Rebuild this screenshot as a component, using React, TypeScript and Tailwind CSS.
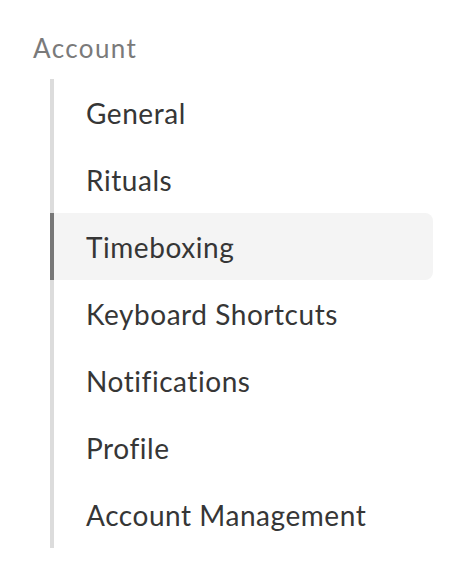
const items = [
  'General',
  'Rituals',
  'Timeboxing',
  'Keyboard Shortcuts',
  'Notifications',
  'Profile',
  'Account Management',
]

export default function App() {
  const active = 'Timeboxing'

  return (
    <div className="min-h-screen w-[472px] bg-white pl-[33px] pt-[31px] font-['Lato',sans-serif]">
      {/* Section title */}
      <h2 className="text-[26px] leading-[34px] tracking-[1.4px] text-[#7a7a7a]">Account</h2>

      {/* Nav list */}
      <nav className="mt-[14px] ml-[17px] w-[383px] border-l-4 border-[#dcdcdc]">
        {items.map((item) => {
          const isActive = item === active
          return (
            <div
              key={item}
              className={`-ml-1 flex h-[67px] items-center rounded-r-lg border-l-4 pl-8 text-[28px] tracking-[0.55px] text-[#363636] ${
                isActive ? 'border-[#777777] bg-[#f4f4f4]' : 'border-transparent'
              }`}
            >
              {item}
            </div>
          )
        })}
      </nav>
    </div>
  )
}
